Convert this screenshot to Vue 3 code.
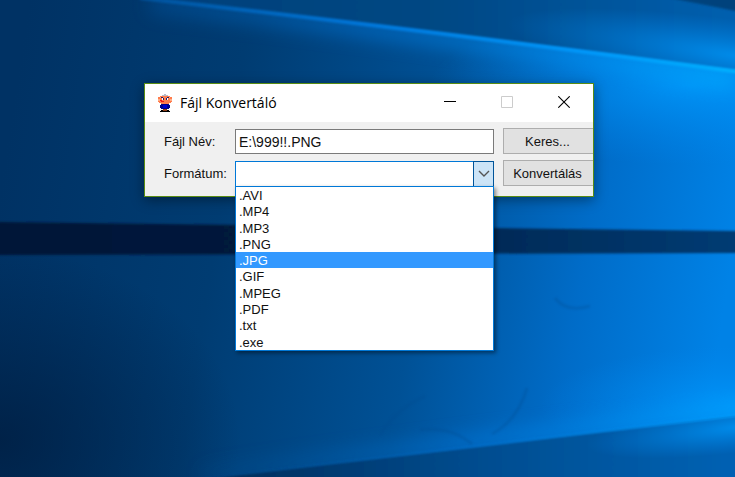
<script setup>
import { ref } from 'vue'

const fileName = ref('E:\\999!!.PNG')
const format = ref('')
const highlighted = ref('.JPG')
const open = ref(true)
const formats = ['.AVI', '.MP4', '.MP3', '.PNG', '.JPG', '.GIF', '.MPEG', '.PDF', '.txt', '.exe']

function choose(item) {
  format.value = item
  open.value = false
}
</script>

<template>
  <div class="desktop">
    <svg class="wallpaper" viewBox="0 0 735 477" preserveAspectRatio="none" aria-hidden="true">
      <defs>
        <linearGradient id="base" x1="0" y1="0.4" x2="1" y2="0.5">
          <stop offset="0" stop-color="#003264" />
          <stop offset="0.3" stop-color="#003c72" />
          <stop offset="0.58" stop-color="#005196" />
          <stop offset="0.8" stop-color="#006cc8" />
          <stop offset="1" stop-color="#0082e6" />
        </linearGradient>
        <linearGradient id="sky" x1="0" y1="0" x2="1" y2="0">
          <stop offset="0" stop-color="#00407a" />
          <stop offset="0.5" stop-color="#004884" />
          <stop offset="1" stop-color="#0060b0" />
        </linearGradient>
        <linearGradient id="floor" x1="0" y1="0" x2="1" y2="0">
          <stop offset="0" stop-color="#002a56" />
          <stop offset="0.5" stop-color="#004c8e" />
          <stop offset="1" stop-color="#0062b4" />
        </linearGradient>
        <linearGradient id="bar" x1="0" y1="0" x2="1" y2="0">
          <stop offset="0" stop-color="#001838" />
          <stop offset="0.35" stop-color="#001a3c" />
          <stop offset="0.7" stop-color="#002c5a" />
          <stop offset="1" stop-color="#003c74" />
        </linearGradient>
        <linearGradient id="beam" gradientUnits="userSpaceOnUse" x1="130" y1="0" x2="735" y2="0">
          <stop offset="0" stop-color="#0064bc" stop-opacity="0.5" />
          <stop offset="0.4" stop-color="#0078dc" />
          <stop offset="0.75" stop-color="#0098fa" />
          <stop offset="1" stop-color="#00b0ff" />
        </linearGradient>
        <linearGradient id="lowbeam" gradientUnits="userSpaceOnUse" x1="200" y1="0" x2="735" y2="0">
          <stop offset="0" stop-color="#005ca8" stop-opacity="0.2" />
          <stop offset="0.5" stop-color="#0078dc" />
          <stop offset="1" stop-color="#00a4ff" />
        </linearGradient>
        <radialGradient id="shade">
          <stop offset="0" stop-color="#001c3e" stop-opacity="0.75" />
          <stop offset="1" stop-color="#001c3e" stop-opacity="0" />
        </radialGradient>
        <radialGradient id="glow">
          <stop offset="0" stop-color="#009cff" stop-opacity="0.75" />
          <stop offset="1" stop-color="#0088f0" stop-opacity="0" />
        </radialGradient>
        <clipPath id="above"><path d="M140 -3 Q430 30 740 71 V-4 H140Z" /></clipPath>
        <clipPath id="below"><path d="M200 480 Q480 446 740 416 V480Z" /></clipPath>
        <filter id="soft" x="-20%" y="-20%" width="140%" height="140%">
          <feGaussianBlur stdDeviation="1" />
        </filter>
        <filter id="wide" x="-20%" y="-50%" width="140%" height="200%">
          <feGaussianBlur stdDeviation="9" />
        </filter>
      </defs>
      <rect width="735" height="477" fill="url(#base)" />
      <ellipse cx="0" cy="440" rx="240" ry="190" fill="url(#shade)" />
      <ellipse cx="690" cy="85" rx="260" ry="80" fill="url(#glow)" />
      <ellipse cx="750" cy="405" rx="210" ry="60" fill="url(#glow)" />
      <path d="M150 4 Q430 34 735 80" fill="none" stroke="url(#beam)" stroke-width="18" opacity="0.55" filter="url(#wide)" />
      <path d="M140 -3 Q430 30 740 71 V-4 H140Z" fill="url(#sky)" filter="url(#soft)" />
      <g clip-path="url(#above)">
        <ellipse cx="745" cy="57" rx="240" ry="36" transform="rotate(8 745 57)" fill="url(#glow)" />
      </g>
      <path d="M665 -3 L740 12 V-3Z" fill="#00427c" filter="url(#soft)" />
      <path d="M140 -2 Q430 31 740 72" fill="none" stroke="url(#beam)" stroke-width="4" filter="url(#soft)" />
      <path d="M200 474 Q480 440 745 408" fill="none" stroke="url(#lowbeam)" stroke-width="14" opacity="0.6" filter="url(#wide)" />
      <path d="M200 480 Q480 446 740 416 V480Z" fill="url(#floor)" filter="url(#soft)" />
      <g clip-path="url(#below)">
        <ellipse cx="745" cy="426" rx="160" ry="26" transform="rotate(-7 745 426)" fill="url(#glow)" />
      </g>
      <path d="M200 479 Q480 445 740 415" fill="none" stroke="url(#lowbeam)" stroke-width="2" opacity="0.5" filter="url(#soft)" />
      <path d="M-4 222 L740 231 V253 L-4 255Z" fill="url(#bar)" filter="url(#soft)" />
      <g fill="none" stroke="#00488c" stroke-width="3" opacity="0.25" filter="url(#soft)">
        <path d="M555 298 Q566 313 590 306" />
        <path d="M380 435 Q395 410 425 396 M420 430 Q450 426 472 444" />
        <path d="M527 388 Q518 420 492 434" />
      </g>
    </svg>

    <main class="window">
      <header class="titlebar">
        <svg class="app-icon" viewBox="0 0 16 18" shape-rendering="crispEdges" aria-hidden="true">
          <path fill="#b8bcc8" d="M7 0h2v2H7zM5 1h6v1H5z" />
          <path fill="#ff7c4c" d="M3 2h10v1H3zM1 3h14v5H1zM2 8h12v1H2zM4 9h8v1H4z" />
          <path fill="#ffae88" d="M3 3h3v1H3zM10 3h3v1h-3zM1 5h2v2H1zM13 5h2v2h-2z" />
          <path fill="#fff" d="M5 4h2v2H5zM9 4h2v2H9z" />
          <path fill="#20206c" d="M6 4h1v2H6zM9 4h1v2H9zM4 3h2v1H4zM10 3h2v1h-2z" />
          <path fill="#f01818" d="M4 7h3v1H4zM3 6h2v1H3z" />
          <path fill="#00008c" d="M4 10h8v1H4zM3 11h10v3H3zM4 14h8v1H4z" />
          <path fill="#0000d0" d="M6 11h4v3H6z" />
          <path fill="#8c3c18" d="M6 15h4v2H6z" />
          <path fill="#000" d="M4 16h2v1H4zM10 16h2v1h-2zM3 17h10v1H3z" />
        </svg>
        <h1>Fájl Konvertáló</h1>
        <button class="caption" type="button" aria-label="Kis méret">
          <svg viewBox="0 0 12 12"><path d="M0 5.5h12" stroke="#000" /></svg>
        </button>
        <button class="caption" type="button" aria-label="Teljes méret" disabled>
          <svg viewBox="0 0 12 12"><path d="M.5.5h11v11H.5z" fill="none" stroke="#ccc" /></svg>
        </button>
        <button class="caption" type="button" aria-label="Bezárás">
          <svg viewBox="0 0 12 12"><path d="M.3.3l11.4 11.4M11.7.3L.3 11.7" stroke="#000" stroke-width="1.1" /></svg>
        </button>
      </header>

      <form class="form" @submit.prevent>
        <label for="file">Fájl Név:</label>
        <input id="file" v-model="fileName" class="file" type="text" />
        <button class="action" type="button">Keres...</button>

        <label for="format">Formátum:</label>
        <div class="combo">
          <select id="format" v-model="format" @mousedown.prevent="open = !open">
            <option value=""></option>
            <option v-for="item in formats" :key="item" :value="item">{{ item }}</option>
          </select>
          <span class="arrow" aria-hidden="true">
            <svg viewBox="0 0 12 8"><path d="M1 1l5 5 5-5" fill="none" stroke="#555" stroke-width="1.4" /></svg>
          </span>
          <ul v-if="open" class="list" role="listbox" aria-label="Formátum">
            <li
              v-for="item in formats"
              :key="item"
              role="option"
              :aria-selected="item === highlighted"
              :class="{ active: item === highlighted }"
              @mouseenter="highlighted = item"
              @click="choose(item)"
            >{{ item }}</li>
          </ul>
        </div>
        <button class="action" type="submit">Konvertálás</button>
      </form>
    </main>
  </div>
</template>

<style>
body {
  margin: 0;
}
</style>

<style scoped>
.desktop {
  position: relative;
  box-sizing: border-box;
  min-height: 100vh;
  padding: 83px 141px 0 144px;
  background: #004a8c;
  font: 13px/16px "Liberation Sans", Arial, sans-serif;
  color: #111;
}
.wallpaper {
  position: absolute;
  inset: 0;
  width: 100%;
  height: 100%;
}
.window {
  position: relative;
  border: 1px solid #5a8c14;
  background: #f0f0f0;
  box-shadow: 0 3px 12px rgba(0, 0, 0, 0.4);
}
.titlebar {
  display: flex;
  align-items: center;
  height: 38px;
  padding: 0 1px 0 12px;
  background: #fff;
}
.app-icon {
  width: 16px;
  height: 18px;
  margin-right: 7px;
}
h1 {
  flex: 1;
  margin: 0;
  font: 14px/20px "Open Sans", "Noto Sans", sans-serif;
  color: #000;
}
.caption {
  display: grid;
  place-items: center;
  width: 57px;
  height: 36px;
  padding: 0 0 2px;
  border: 0;
  background: none;
}
.caption svg {
  width: 12px;
  height: 12px;
}
.form {
  display: grid;
  grid-template-columns: 62px minmax(0, 1fr) 90px;
  grid-auto-rows: 26px;
  gap: 6px 9px;
  padding: 6px 0 10px 19px;
}
label {
  align-self: center;
  padding-top: 2px;
  white-space: nowrap;
}
.file {
  box-sizing: border-box;
  width: 100%;
  height: 25px;
  margin: 1px 0 0;
  padding: 0 3px;
  border: 1px solid #7a7a7a;
  background: #fff;
  font: 14px/16px "Liberation Sans", Arial, sans-serif;
  color: #111;
  outline: 0;
}
.action {
  padding: 2px 2px 0 0;
  border: 1px solid #adadad;
  border-right: 0;
  background: #e1e1e1;
  font: inherit;
  color: #111;
}
.combo {
  position: relative;
  height: 26px;
  margin-top: 1px;
}
select {
  box-sizing: border-box;
  width: 100%;
  height: 26px;
  padding: 0 24px 0 3px;
  border: 1px solid #0078d7;
  border-radius: 0;
  background: #fff;
  font: inherit;
  color: #111;
  appearance: none;
  outline: 0;
}
.arrow {
  position: absolute;
  top: 0;
  right: 0;
  bottom: 0;
  display: grid;
  place-items: center;
  box-sizing: border-box;
  width: 21px;
  border: 1px solid #005499;
  background: #cce4f7;
  pointer-events: none;
}
.arrow svg {
  width: 12px;
  height: 8px;
}
.list {
  position: absolute;
  top: 25px;
  left: 0;
  right: 0;
  display: grid;
  grid-auto-rows: 1fr;
  height: 163px;
  margin: 0;
  padding: 0;
  border: 1px solid #0078d7;
  background: #fff;
  box-shadow: 2px 2px 4px rgba(0, 0, 0, 0.45);
  line-height: 18px;
  list-style: none;
}
li {
  min-height: 0;
  padding-left: 3px;
  white-space: nowrap;
}
.active {
  background: #3399ff;
  color: #fff;
}
</style>
